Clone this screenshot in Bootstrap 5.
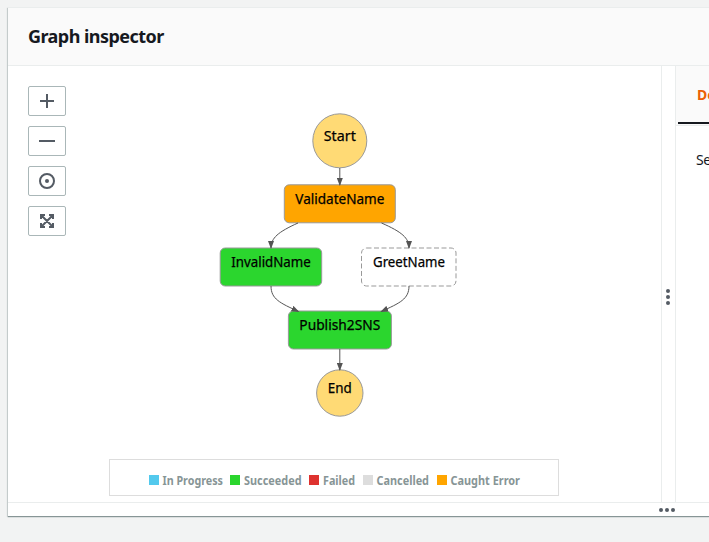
<!DOCTYPE html>
<html lang="en">
<head>
<meta charset="utf-8">
<meta name="viewport" content="width=device-width, initial-scale=1">
<title>Graph inspector</title>
<link href="https://cdn.jsdelivr.net/npm/bootstrap@5.3.0/dist/css/bootstrap.min.css" rel="stylesheet">
<style>
body{background:#f2f3f3;color:#16191f;font-family:"Noto Sans","Open Sans",sans-serif;font-size:14px;height:542px}
.inspector{margin:7px 0 0 8px;height:509px;box-shadow:0 1px 1px #879596,-1px 1px 1px #d0d6d6}
.inspector-head{height:59px;padding:0 0 2px 20px;background:#fafafa;border-bottom:1px solid #eaeded;border-top:1px solid #eaeded}
.inspector-head h2{font-size:18px;letter-spacing:-.55px;line-height:22px}
.graph-pane{width:653px;height:436px}
.tools{width:58px;padding:20px 0 0 20px;gap:10px}
.tool{width:38px;height:30px;border:1px solid #aab7b8;border-radius:2px;color:#545b64}
.tool:hover{border-color:#545b64}
.flow{width:260px;height:320px;margin:40px 0 0 144px}
.flow text{font-size:14px;text-anchor:middle;fill:#000}
.key{width:450px;height:37px;margin:33px 0 0 101px;border:1px solid #ddd;padding:11px 0 0 39px}
.key text{font-size:11.5px;font-weight:700;fill:#879596}
.splitter{width:15px;border:solid #eaeded;border-width:0 1px;color:#545b64;padding:26px 2px 0 0}
.detail-tabs{height:60px;background:#fafafa;border-bottom:1px solid #eaeded;padding-left:2px}
.detail-tab{height:58px;border-bottom:2px solid #16191f;color:#eb5f07;font-weight:700;padding-left:19px}
.detail-text{padding:23px 0 0 20px;letter-spacing:-.5px}
.foot{height:14px;border-top:1px solid #eaeded;padding-left:650px;color:#545b64}
</style>
<script src="https://cdn.jsdelivr.net/npm/bootstrap@5.3.0/dist/js/bootstrap.bundle.min.js" defer></script>
</head>
<body class="overflow-hidden">
<main class="inspector bg-white">
  <header class="inspector-head d-flex align-items-center"><h2 class="fw-bold m-0">Graph inspector</h2></header>
  <div class="d-flex">
    <section class="graph-pane flex-shrink-0">
      <div class="d-flex align-items-start">
        <div class="tools d-flex flex-column">
          <button class="tool btn p-0 d-flex align-items-center justify-content-center" aria-label="Zoom in"><svg width="16" height="16" fill="none" stroke="currentColor" stroke-width="2"><path d="M1 8h14M8 1v14"/></svg></button>
          <button class="tool btn p-0 d-flex align-items-center justify-content-center" aria-label="Zoom out"><svg width="16" height="16" fill="none" stroke="currentColor" stroke-width="2"><path d="M0 8h16"/></svg></button>
          <button class="tool btn p-0 d-flex align-items-center justify-content-center" aria-label="Center"><svg width="16" height="16" fill="none" stroke="currentColor" stroke-width="2"><circle cx="8" cy="8" r="7"/><circle cx="8" cy="8" r="2" fill="currentColor" stroke="none"/></svg></button>
          <button class="tool btn p-0 d-flex align-items-center justify-content-center" aria-label="Fit"><svg width="16" height="16" fill="none" stroke="currentColor" stroke-width="2"><path d="M2 6V2h4M10 2h4v4M14 10v4h-4M6 14H2v-4M2 2l12 12M14 2L2 14"/></svg></button>
        </div>
        <svg class="flow" viewBox="210 106 260 320" aria-label="State machine">
          <defs><marker id="tip" viewBox="0 0 8 6" refX="7" refY="3" markerWidth="8" markerHeight="6" markerUnits="userSpaceOnUse" orient="auto"><path d="M0 0L8 3L0 6z" fill="#545454"/></marker></defs>
          <g stroke="#999" stroke-width="1">
            <circle cx="339.8" cy="140.8" r="27" fill="#ffda75"/>
            <rect x="284.3" y="184.8" width="111" height="38" rx="5" fill="#ffa500"/>
            <rect x="220.2" y="248" width="101.5" height="38" rx="5" fill="#2bd62e"/>
            <rect x="361.5" y="248" width="94.5" height="38" rx="5" fill="#fff" stroke-dasharray="5 2.5"/>
            <rect x="288.4" y="311" width="103" height="38" rx="5" fill="#2bd62e"/>
            <circle cx="339.8" cy="393" r="23.2" fill="#ffda75"/>
          </g>
          <g fill="none" stroke="#555">
            <path d="M339.8 168v17" marker-end="url(#tip)"/>
            <path d="M298 223C278 232 271 238 271 248" marker-end="url(#tip)"/>
            <path d="M381.5 223C402 232 409 238 409 248" marker-end="url(#tip)"/>
            <path d="M271 286C271 299 280 303 298.5 311.5" marker-end="url(#tip)"/>
            <path d="M409 286C409 299 400 303 381.2 311.5" marker-end="url(#tip)"/>
            <path d="M339.8 349v21" marker-end="url(#tip)"/>
          </g>
          <g stroke="#000" stroke-width=".25">
            <text x="339.8" y="141" textLength="32" lengthAdjust="spacingAndGlyphs">Start</text>
            <text x="339.8" y="204" textLength="89" lengthAdjust="spacingAndGlyphs">ValidateName</text>
            <text x="271" y="267" textLength="79.5" lengthAdjust="spacingAndGlyphs">InvalidName</text>
            <text x="409" y="267" textLength="72" lengthAdjust="spacingAndGlyphs">GreetName</text>
            <text x="339.8" y="330" textLength="81" lengthAdjust="spacingAndGlyphs">Publish2SNS</text>
            <text x="339.8" y="393" textLength="24" lengthAdjust="spacingAndGlyphs">End</text>
          </g>
        </svg>
      </div>
      <div class="key">
        <svg class="d-block" width="380" height="18" viewBox="149 471 380 18" aria-label="Status legend">
          <path fill="#53c9ed" d="M149 475h10v10h-10z"/><path fill="#2bd62e" d="M230 475h10v10h-10z"/><path fill="#de322f" d="M309 475h10v10h-10z"/><path fill="#ddd" d="M363 475h10v10h-10z"/><path fill="#ffa500" d="M437 475h10v10h-10z"/>
          <text x="162.5" y="485" textLength="60.5" lengthAdjust="spacingAndGlyphs">In Progress</text>
          <text x="244" y="485" textLength="57.5" lengthAdjust="spacingAndGlyphs">Succeeded</text>
          <text x="323" y="485" textLength="32" lengthAdjust="spacingAndGlyphs">Failed</text>
          <text x="376.5" y="485" textLength="52.5" lengthAdjust="spacingAndGlyphs">Cancelled</text>
          <text x="450.5" y="485" textLength="69.5" lengthAdjust="spacingAndGlyphs">Caught Error</text>
        </svg>
      </div>
    </section>
    <div class="splitter flex-shrink-0 d-flex justify-content-center align-items-center">
      <svg width="4" height="16" fill="currentColor"><circle cx="2" cy="2" r="2"/><circle cx="2" cy="8" r="2"/><circle cx="2" cy="14" r="2"/></svg>
    </div>
    <aside class="flex-fill overflow-hidden">
      <div class="detail-tabs"><div class="detail-tab d-flex align-items-center">Details</div></div>
      <div class="detail-text text-nowrap">Select a step</div>
    </aside>
  </div>
  <footer class="foot d-flex align-items-center"><svg width="18" height="4" fill="currentColor"><circle cx="3" cy="2" r="2"/><circle cx="9" cy="2" r="2"/><circle cx="15" cy="2" r="2"/></svg></footer>
</main>
</body>
</html>
